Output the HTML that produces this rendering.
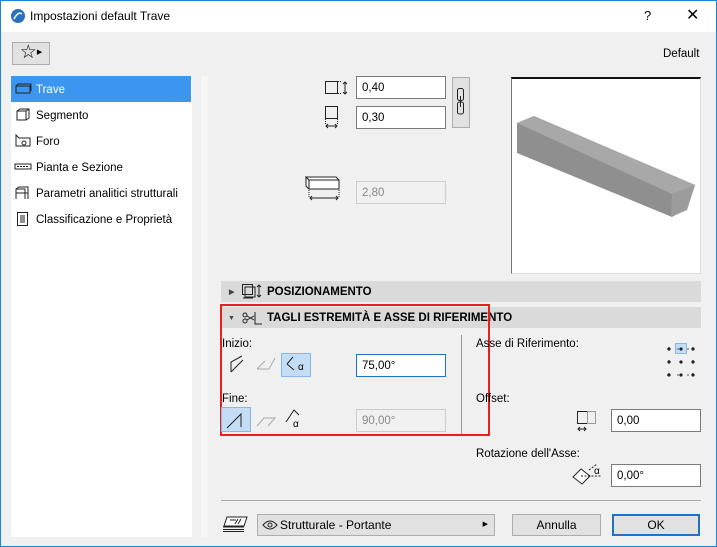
<!DOCTYPE html><html><head><meta charset="utf-8"><style>
*{box-sizing:border-box;margin:0;padding:0}
body{width:717px;height:547px;overflow:hidden;font-family:"Liberation Sans",sans-serif;font-size:11.5px;color:#000;background:#f0f0f0;position:relative}
.a{position:absolute}
.win{left:0;top:0;width:717px;height:547px;border:1px solid #1883d7}
.inp{position:absolute;background:#fff;border:1px solid #7a7a7a;height:23px;padding:5px 5px 0;font-size:11.5px}
.dis{background:#f0f0f0;border-color:#ccc;color:#888}
.btn{position:absolute;background:#e1e1e1;border:1px solid #adadad;text-align:center;height:22px;line-height:20px;font-size:12px}
.hdr{position:absolute;left:221px;width:480px;height:21px;background:#dadada;font-weight:bold;font-size:11.5px;line-height:21px}
.li{position:absolute;left:36px;font-size:11.5px}
svg{position:absolute;overflow:visible}
</style></head><body>
<div class="a win"></div>
<div class="a" style="left:1px;top:1px;width:715px;height:31px;background:#fff"></div>
<svg style="left:10px;top:8px" width="16" height="16"><circle cx="8" cy="8" r="7" fill="#2a6fc0"/><path d="M4 11 Q8 3 12 6" stroke="#fff" stroke-width="1.5" fill="none"/></svg>
<div class="a" style="left:30px;top:9px;font-size:12px">Impostazioni default Trave</div>
<div class="a" style="left:644px;top:8px;font-size:13px">?</div>
<div class="a" style="left:686px;top:5px;font-size:16px">✕</div>
<div class="btn" style="left:12px;top:42px;width:38px;height:23px"><span style="font-size:19px;line-height:20px">☆</span><span style="font-size:7px;vertical-align:4px">▶</span></div>
<div class="a" style="left:663px;top:48px">Default</div>
<div class="a" style="left:11px;top:76px;width:181px;height:461px;background:#fff"></div>
<div class="a" style="left:201px;top:76px;width:7px;height:461px;background:#f7f7f7"></div>
<div class="a" style="left:11px;top:76px;width:180px;height:26px;background:#3c96f0"></div>
<svg style="left:15px;top:83px" width="18" height="12"><rect x="1" y="3" width="14" height="7" fill="none" stroke="#222"/><path d="M1 3 l2-2 h13 v7" stroke="#222" fill="none"/></svg>
<div class="li" style="top:84px;color:#fff">Trave</div>
<svg style="left:16px;top:108px" width="14" height="14"><rect x="1" y="3" width="9" height="9" fill="none" stroke="#222"/><path d="M1 3l3-2h9v9l-3 2M10 3l3-2" stroke="#222" fill="none"/></svg>
<div class="li" style="top:110px">Segmento</div>
<svg style="left:15px;top:134px" width="16" height="14"><path d="M1 1v11h14v-8H4z" stroke="#222" fill="none"/><circle cx="9" cy="9" r="2" fill="none" stroke="#222"/></svg>
<div class="li" style="top:136px">Foro</div>
<svg style="left:14px;top:163px" width="18" height="8"><rect x="1" y="1" width="16" height="5" fill="none" stroke="#222"/><path d="M3 3.5h12" stroke="#222" stroke-dasharray="2 1"/></svg>
<div class="li" style="top:162px">Pianta e Sezione</div>
<svg style="left:15px;top:186px" width="14" height="14"><path d="M1 13V3l3-2h9v12M1 3h9v10M1 7h12" stroke="#222" fill="none"/></svg>
<div class="li" style="top:188px">Parametri analitici strutturali</div>
<svg style="left:17px;top:212px" width="11" height="14"><rect x=".5" y=".5" width="10" height="13" fill="none" stroke="#222"/><path d="M3 4h5M3 6h5M3 8h5M3 10h5" stroke="#222"/></svg>
<div class="li" style="top:214px">Classificazione e Proprietà</div>
<svg style="left:325px;top:81px" width="24" height="14"><rect x=".5" y=".5" width="12" height="12" fill="none" stroke="#222"/><path d="M13 .5h4M13 12.5h4" stroke="#222" stroke-dasharray="1 1"/><path d="M20 1v12M18 3l2-2 2 2M18 11l2 2 2-2" stroke="#222" fill="none"/></svg>
<div class="inp" style="left:356px;top:76px;width:90px">0,40</div>
<svg style="left:325px;top:106px" width="14" height="24"><rect x=".5" y=".5" width="12" height="12" fill="none" stroke="#222"/><path d="M.5 13v5M12.5 13v5" stroke="#222" stroke-dasharray="1 1"/><path d="M1 20h11M3 18l-2 2 2 2M10 18l2 2-2 2" stroke="#222" fill="none"/></svg>
<div class="inp" style="left:356px;top:106px;width:90px">0,30</div>
<div class="btn" style="left:452px;top:77px;width:18px;height:51px"></div>
<svg style="left:457px;top:88px" width="8" height="28"><rect x=".5" y=".5" width="6" height="12" rx="2" fill="none" stroke="#222"/><rect x=".5" y="14" width="6" height="12" rx="2" fill="none" stroke="#222"/><path d="M3.5 8v11" stroke="#222"/></svg>
<svg style="left:305px;top:176px" width="44" height="28"><path d="M4 4h30v9H4zM4 4l-3-3h30l3 3M1 1v9l3 3" stroke="#222" fill="#fff"/><path d="M4 14v7M34 14v7" stroke="#222" stroke-dasharray="1 1"/><path d="M5 22h28M7 20l-2 2 2 2M31 20l2 2-2 2" stroke="#222" fill="none"/></svg>
<div class="inp dis" style="left:356px;top:181px;width:90px">2,80</div>
<div class="a" style="left:511px;top:77px;width:190px;height:197px;background:#fff;border:1px solid #ddd;border-left:1px solid #777;border-top:2px solid #111"></div>
<svg style="left:511px;top:77px" width="190" height="197"><polygon points="6,46 23,39 184,108 176,132 161,140 6,76" fill="#8f8f8f"/><polygon points="6,46 23,39 184,108 161,117" fill="#a8a8a8"/><polygon points="161,117 184,108 176,133 160,140" fill="#9c9c9c"/></svg>
<div class="hdr" style="top:281px"><span style="font-size:7px;margin:0 0 0 8px;color:#444">▶</span></div>
<svg style="left:242px;top:284px" width="20" height="16"><rect x=".5" y=".5" width="10" height="10" fill="none" stroke="#222"/><path d="M3 3h10v10H3z M1 14h10" stroke="#222" fill="none"/><path d="M17 1v12M15 3l2-2 2 2M15 11l2 2 2-2" stroke="#222" fill="none"/></svg>
<div class="a" style="left:267px;top:286px;font-weight:bold">POSIZIONAMENTO</div>
<div class="hdr" style="top:307px"><span style="font-size:7px;margin:0 0 0 7px;color:#444">▼</span></div>
<svg style="left:242px;top:311px" width="20" height="14"><circle cx="3" cy="4" r="2" fill="none" stroke="#222"/><circle cx="3" cy="10" r="2" fill="none" stroke="#222"/><path d="M5 5l7 4M5 9l7-4M13 1v12h7" stroke="#222" fill="none"/></svg>
<div class="a" style="left:267px;top:312px;font-weight:bold">TAGLI ESTREMITÀ E ASSE DI RIFERIMENTO</div>
<div class="a" style="left:220px;top:304px;width:270px;height:132px;border:2px solid #e52020"></div>
<div class="a" style="left:461px;top:335px;width:1px;height:99px;background:#999"></div>
<div class="a" style="left:222px;top:338px">Inizio:</div>
<svg style="left:230px;top:355px" width="14" height="18"><path d="M1 17V7l11-6M1 17l12-12" stroke="#222" fill="none"/></svg>
<svg style="left:256px;top:357px" width="20" height="14"><path d="M1 12h12l6-11M1 12l8-8" stroke="#aaa" fill="none"/></svg>
<div class="a" style="left:281px;top:353px;width:30px;height:24px;background:#c4ddf5;border:1px solid #86b7e8"></div>
<svg style="left:286px;top:356px" width="22" height="18"><path d="M1 8l6-7M1 8l7 6" stroke="#222" fill="none"/><text x="12" y="14" font-size="10" font-family="Liberation Sans">α</text></svg>
<div class="inp" style="left:356px;top:354px;width:90px;border-color:#1e73c8">75,00°</div>
<div class="a" style="left:222px;top:393px">Fine:</div>
<div class="a" style="left:221px;top:407px;width:30px;height:25px;background:#c4ddf5;border:1px solid #86b7e8"></div>
<svg style="left:226px;top:411px" width="18" height="18"><path d="M1 17L15 3v13" stroke="#222" fill="none"/></svg>
<svg style="left:256px;top:412px" width="20" height="16"><path d="M1 14l7-8h11l-7 8" stroke="#aaa" fill="none"/></svg>
<svg style="left:285px;top:409px" width="22" height="20"><path d="M1 13l8-12 5 5" stroke="#222" fill="none"/><text x="8" y="18" font-size="10" font-family="Liberation Sans">α</text></svg>
<div class="inp dis" style="left:356px;top:409px;width:90px">90,00°</div>
<div class="a" style="left:476px;top:338px">Asse di Riferimento:</div>
<div class="a" style="left:675px;top:343px;width:12px;height:11px;background:#c4ddf5;border:1px solid #86b7e8"></div>
<svg style="left:666px;top:344px" width="32" height="34"><g fill="#222"><circle cx="3" cy="5" r="1.6"/><circle cx="15" cy="5" r="1.6"/><circle cx="27" cy="5" r="1.6"/><circle cx="3" cy="18" r="1.6"/><circle cx="15" cy="18" r="1.6"/><circle cx="27" cy="18" r="1.6"/><circle cx="3" cy="31" r="1.6"/><circle cx="15" cy="31" r="1.6"/><circle cx="27" cy="31" r="1.6"/></g><path d="M0 5h30M3 2v6M27 2v6M3 15v6M27 15v6M0 31h30M3 28v6M27 28v6" stroke="#222" stroke-width=".8" stroke-dasharray="2 8" stroke-dashoffset="-1"/></svg>
<div class="a" style="left:476px;top:393px">Offset:</div>
<svg style="left:577px;top:409px" width="22" height="24"><rect x=".5" y="2.5" width="10" height="12" fill="none" stroke="#222"/><rect x="10.5" y="2.5" width="8" height="12" fill="none" stroke="#999"/><path d="M1 20h8M3 18l-2 2 2 2M7 18l2 2-2 2" stroke="#222" fill="none"/></svg>
<div class="inp" style="left:611px;top:409px;width:90px">0,00</div>
<div class="a" style="left:476px;top:448px">Rotazione dell'Asse:</div>
<svg style="left:572px;top:463px" width="34" height="22"><path d="M1 14l8-8 9 7-8 8z" stroke="#222" fill="#fff"/><path d="M9 13h20M17 7l8-6" stroke="#222" stroke-dasharray="2 1.5" fill="none"/><text x="22" y="11" font-size="10" font-family="Liberation Sans">α</text></svg>
<div class="inp" style="left:611px;top:464px;width:90px">0,00°</div>
<div class="a" style="left:221px;top:500px;width:480px;height:1px;background:#aaa"></div>
<svg style="left:222px;top:516px" width="26" height="16"><path d="M5 1h20l-3 9H2z" stroke="#222" fill="#fff"/><path d="M1 11h21M1 13.5h21M1 15.5h21" stroke="#222"/><path d="M8 4h6M16 3l-3 5M19 3l-3 5" stroke="#222"/></svg>
<div class="btn" style="left:257px;top:514px;width:238px;text-align:left;padding-left:22px">Strutturale - Portante<span style="position:absolute;right:6px;font-size:7px">▶</span></div>
<svg style="left:262px;top:520px" width="16" height="10"><path d="M1 5Q8-3 15 5Q8 13 1 5z" stroke="#222" fill="none"/><circle cx="8" cy="5" r="2" fill="none" stroke="#222"/></svg>
<div class="btn" style="left:512px;top:514px;width:89px">Annulla</div>
<div class="btn" style="left:612px;top:514px;width:88px;border:2px solid #1e73c8;line-height:18px">OK</div>
</body></html>
